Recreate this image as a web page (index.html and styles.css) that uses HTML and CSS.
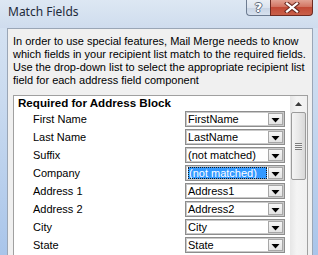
FILE: index.html
```html
<!DOCTYPE html>
<html lang="en">
<head>
    <meta charset="UTF-8">
    <title>Match Fields</title>
    <link rel="stylesheet" href="styles.css">
</head>
<body>
    <div class="window">
        <div class="titlebar">
            <span class="title">Match Fields</span>
            <div class="caption-buttons">
                <span class="cap-btn help">?</span>
                <span class="cap-btn close">
                    <svg width="16" height="11" viewBox="0 0 16 11">
                        <path d="M3 1.5 L13 9.5 M13 1.5 L3 9.5" stroke="#6b2a22" stroke-width="4.2" stroke-linecap="square"/>
                        <path d="M3 1.5 L13 9.5 M13 1.5 L3 9.5" stroke="#ffffff" stroke-width="2.2" stroke-linecap="square"/>
                    </svg>
                </span>
            </div>
        </div>
        <div class="frame">
            <div class="panel">
                <p class="intro">In order to use special features, Mail Merge needs to know<br>which fields in your recipient list match to the required fields.<br>Use the drop-down list to select the appropriate recipient list<br>field for each address field component</p>
                <div class="listbox">
                    <div class="fields">
                        <div class="group">Required for Address Block</div>
                        <div class="row"><span class="label">First Name</span><div class="combo"><span class="value">FirstName</span><span class="drop"><svg width="9" height="5" viewBox="0 0 9 5"><path d="M0.5 0 H8.5 L4.5 4.5 Z" fill="#000"/></svg></span></div></div>
                        <div class="row"><span class="label">Last Name</span><div class="combo"><span class="value">LastName</span><span class="drop"><svg width="9" height="5" viewBox="0 0 9 5"><path d="M0.5 0 H8.5 L4.5 4.5 Z" fill="#000"/></svg></span></div></div>
                        <div class="row"><span class="label">Suffix</span><div class="combo"><span class="value">(not matched)</span><span class="drop"><svg width="9" height="5" viewBox="0 0 9 5"><path d="M0.5 0 H8.5 L4.5 4.5 Z" fill="#000"/></svg></span></div></div>
                        <div class="row"><span class="label">Company</span><div class="combo focused"><span class="value"><span class="selected">(not matched)</span></span><span class="drop"><svg width="9" height="5" viewBox="0 0 9 5"><path d="M0.5 0 H8.5 L4.5 4.5 Z" fill="#000"/></svg></span></div></div>
                        <div class="row"><span class="label">Address 1</span><div class="combo"><span class="value">Address1</span><span class="drop"><svg width="9" height="5" viewBox="0 0 9 5"><path d="M0.5 0 H8.5 L4.5 4.5 Z" fill="#000"/></svg></span></div></div>
                        <div class="row"><span class="label">Address 2</span><div class="combo"><span class="value">Address2</span><span class="drop"><svg width="9" height="5" viewBox="0 0 9 5"><path d="M0.5 0 H8.5 L4.5 4.5 Z" fill="#000"/></svg></span></div></div>
                        <div class="row"><span class="label">City</span><div class="combo"><span class="value">City</span><span class="drop"><svg width="9" height="5" viewBox="0 0 9 5"><path d="M0.5 0 H8.5 L4.5 4.5 Z" fill="#000"/></svg></span></div></div>
                        <div class="row"><span class="label">State</span><div class="combo"><span class="value">State</span><span class="drop"><svg width="9" height="5" viewBox="0 0 9 5"><path d="M0.5 0 H8.5 L4.5 4.5 Z" fill="#000"/></svg></span></div></div>
                    </div>
                    <div class="scrollbar">
                        <div class="scroll-up">
                            <svg width="7" height="4" viewBox="0 0 7 4"><path d="M3.5 0 L7 4 H0 Z" fill="#3c3c3c"/></svg>
                        </div>
                        <div class="thumb">
                            <span class="grip"></span>
                        </div>
                    </div>
                </div>
            </div>
        </div>
    </div>
</body>
</html>
```

FILE: styles.css
```css
body {
    margin: 0;
    font-family: "Liberation Sans", Arial, sans-serif;
    font-size: 11px;
    color: #000;
    background-color: #c3d6ee;
}
.window {
    width: 318px;
    height: 255px;
    overflow: hidden;
    background: linear-gradient(to bottom, #d8e4f2 0%, #c9daef 40%, #a9c5ea 100%);
}
.titlebar {
    height: 28px;
    display: flex;
    justify-content: space-between;
    align-items: flex-start;
    background: linear-gradient(to bottom, #dde7f3 0%, #d6e2f0 50%, #cfdcee 100%);
}
.title {
    font-family: "Noto Sans", sans-serif;
    font-size: 12px;
    padding-left: 8px;
    padding-top: 4px;
    line-height: 16px;
    color: #1e2a3a;
}
.caption-buttons {
    display: flex;
    margin-right: 5px;
}
.cap-btn {
    height: 16px;
    display: flex;
    align-items: center;
    justify-content: center;
    box-sizing: border-box;
    border: 1px solid #6d7c91;
    border-top: none;
}
.help {
    width: 24px;
    border-radius: 0 0 0 4px;
    border-right: none;
    background: linear-gradient(to bottom, #e9eef5 0%, #dbe3ee 50%, #c7d3e3 51%, #d7e1ee 100%);
    font-family: "DejaVu Sans", sans-serif;
    font-weight: bold;
    font-size: 13px;
    color: #ffffff;
    text-shadow: -1px 0 #5f6b7c, 1px 0 #5f6b7c, 0 -1px #5f6b7c, 0 1px #5f6b7c;
}
.close {
    width: 43px;
    border-radius: 0 0 4px 0;
    border-color: #6e2b22;
    background: linear-gradient(to bottom, #e2a293 0%, #d27563 45%, #c24a36 50%, #c9604a 100%);
}
.frame {
    display: flex;
    padding-left: 7px;
    padding-right: 5px;
}
.panel {
    flex: 1;
    height: 240px;
    background-color: #f0f0f0;
    border: 1px solid #9aa6b6;
    border-bottom: none;
    padding: 6px 0 0 5px;
}
.intro {
    margin: 0;
    line-height: 13px;
    color: #000;
}
.listbox {
    display: flex;
    margin-top: 8px;
    width: 293px;
    height: 170px;
    background-color: #ffffff;
    border: 1px solid #a0a0a0;
    border-bottom: none;
}
.fields {
    flex: 1;
}
.group {
    font-weight: bold;
    font-size: 11.6px;
    padding-left: 4px;
    line-height: 14px;
}
.row {
    display: flex;
    align-items: center;
    height: 18px;
}
.label {
    width: 171px;
    padding-left: 19px;
    box-sizing: border-box;
}
.combo {
    display: flex;
    width: 100px;
    height: 16px;
    box-sizing: border-box;
    border: 1px solid #8d8d8d;
    box-shadow: inset 0 0 0 1px #c9c9c9;
    background-color: #ffffff;
    padding: 1px;
}
.value {
    flex: 1;
    line-height: 12px;
    padding-left: 1px;
    white-space: nowrap;
    overflow: hidden;
}
.selected {
    display: block;
    background-color: #3399ff;
    color: #ffffff;
    outline: 1px dotted #1a1a1a;
    outline-offset: -1px;
    padding-left: 1px;
    margin-right: 1px;
}
.drop {
    width: 15px;
    display: flex;
    align-items: center;
    justify-content: center;
    box-sizing: border-box;
    border: 1px solid #a7a7a7;
    background: linear-gradient(to bottom, #f6f6f6, #e3e3e3);
    padding-top: 3px;
}
.scrollbar {
    width: 17px;
    background: linear-gradient(to right, #e6e6e6, #f4f4f4 40%, #f0f0f0);
    display: flex;
    flex-direction: column;
    align-items: center;
}
.scroll-up {
    height: 16px;
    display: flex;
    align-items: center;
    justify-content: center;
}
.thumb {
    width: 15px;
    height: 68px;
    box-sizing: border-box;
    border: 1px solid #9b9b9b;
    border-radius: 2px;
    background: linear-gradient(to right, #f4f4f4, #e8e8e8 50%, #d8d8d8);
    display: flex;
    align-items: center;
    justify-content: center;
}
.grip {
    width: 7px;
    height: 7px;
    background: repeating-linear-gradient(to bottom, #7d7d7d 0, #7d7d7d 1px, #f2f2f2 1px, #f2f2f2 2px);
}
```
